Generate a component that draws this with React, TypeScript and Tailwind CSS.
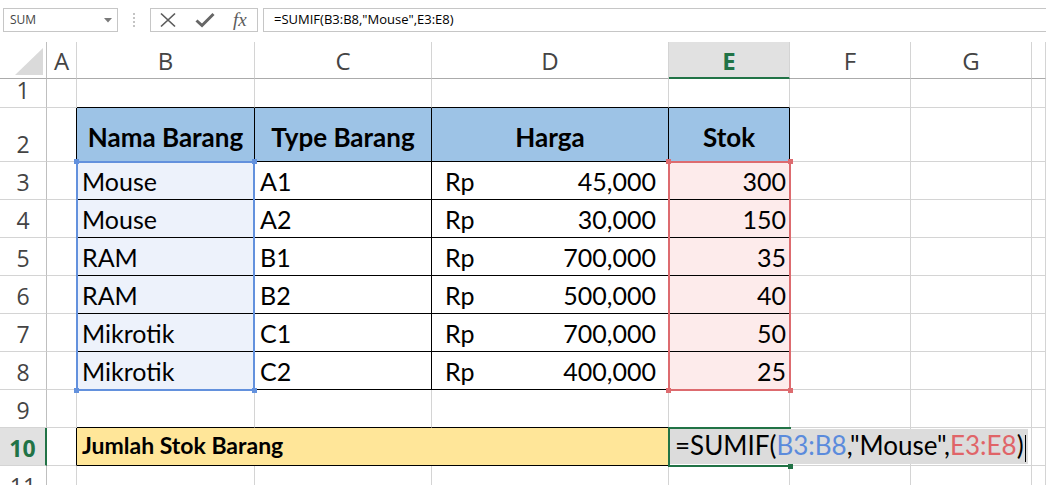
import React from 'react'

const rows = [
  { n: 3, name: 'Mouse', type: 'A1', price: '45,000', stok: '300' },
  { n: 4, name: 'Mouse', type: 'A2', price: '30,000', stok: '150' },
  { n: 5, name: 'RAM', type: 'B1', price: '700,000', stok: '35' },
  { n: 6, name: 'RAM', type: 'B2', price: '500,000', stok: '40' },
  { n: 7, name: 'Mikrotik', type: 'C1', price: '700,000', stok: '50' },
  { n: 8, name: 'Mikrotik', type: 'C2', price: '400,000', stok: '25' },
]

interface CellProps {
  r?: string
  b?: string
  className?: string
  children?: React.ReactNode
}

// plain worksheet cell: right + bottom gridline
function Cell({ r = 'border-r-[#d4d4d4]', b = 'border-b-[#d4d4d4]', className = '', children }: CellProps) {
  return <div className={`border-r border-b ${r} ${b} ${className}`}>{children}</div>
}

function RowHead({ n, active }: { n: number; active?: boolean }) {
  if (active) {
    return (
      <div className="flex items-end justify-center pb-[5px] border-r-2 border-b border-r-[#217346] border-b-[#d4d4d4] bg-[#e1e1e1] text-[23px] leading-none font-bold text-[#217346] font-['Open_Sans',sans-serif]">
        {n}
      </div>
    )
  }
  return (
    <div className="flex items-end justify-center pb-[5px] border-r border-b border-r-[#bfbfbf] border-b-[#d4d4d4] text-[23px] leading-none text-[#444] font-['Open_Sans',sans-serif]">
      {n}
    </div>
  )
}

function ColHead({ label, active }: { label: string; active?: boolean }) {
  if (active) {
    return (
      <div className="flex items-center justify-center pt-[2px] border-r border-b-2 border-r-[#d4d4d4] border-b-[#217346] bg-[#e1e1e1] text-[24px] leading-none font-bold text-[#217346] font-['Open_Sans',sans-serif]">
        {label}
      </div>
    )
  }
  return (
    <div className="flex items-center justify-center pt-[2px] border-r border-b border-r-[#d4d4d4] border-b-[#ababab] text-[24px] leading-none text-[#444] font-['Open_Sans',sans-serif]">
      {label}
    </div>
  )
}

export default function App() {
  return (
    <div className="w-[1046px] h-[485px] overflow-hidden bg-white font-['Lato',sans-serif] text-black">
      {/* Formula bar */}
      <div className="h-[42px] flex items-start pt-[8px]">
        <div className="ml-[3px] w-[115px] h-[24px] border border-[#c6c6c6] flex items-center justify-between pl-[6px] pr-[5px]">
          <span className="text-[12px] text-[#444] font-['Open_Sans',sans-serif]">SUM</span>
          <svg width="8" height="5" viewBox="0 0 8 5">
            <polygon points="0,0 8,0 4,4.5" fill="#7a7a7a" />
          </svg>
        </div>
        <div className="w-[32px] h-[24px] flex flex-col items-center justify-center gap-[2px]">
          <span className="w-[2px] h-[2px] bg-[#c4c4c4]" />
          <span className="w-[2px] h-[2px] bg-[#c4c4c4]" />
          <span className="w-[2px] h-[2px] bg-[#c4c4c4]" />
          <span className="w-[2px] h-[2px] bg-[#c4c4c4]" />
        </div>
        <div className="w-[108px] h-[24px] border border-[#c6c6c6] flex items-center pl-[8px] gap-[18px]">
          <svg width="18" height="16" viewBox="0 0 18 16">
            <path d="M2 1.5 L16 14.5 M16 1.5 L2 14.5" stroke="#5c5c5c" strokeWidth="1.7" fill="none" />
          </svg>
          <svg width="20" height="16" viewBox="0 0 20 16">
            <path d="M1.5 8.5 L7 13.5 L18.5 2" stroke="#666" strokeWidth="3" fill="none" strokeLinejoin="miter" />
          </svg>
          <span className="text-[19px] leading-none italic text-[#5c5c5c] font-['Liberation_Serif',serif] -mt-[2px]">fx</span>
        </div>
        <div className="ml-[5px] flex-1 h-[24px] border border-r-0 border-[#c6c6c6] flex items-center pl-[10px] text-[13px] text-black font-['Open_Sans',sans-serif]">
          =SUMIF(B3:B8,"Mouse",E3:E8)
        </div>
      </div>

      {/* Worksheet */}
      <div className="grid grid-cols-[47px_30px_178px_177px_237px_121px_121px_121px_1fr] grid-rows-[37px_29px_54px_repeat(9,38px)]">
        {/* header row */}
        <div className="border-r border-b border-r-[#bfbfbf] border-b-[#ababab] flex items-end justify-end pr-[3px] pb-[3px]">
          <svg width="28" height="27" viewBox="0 0 28 27">
            <polygon points="0,27 28,27 28,0" fill="#dadada" />
          </svg>
        </div>
        <ColHead label="A" />
        <ColHead label="B" />
        <ColHead label="C" />
        <ColHead label="D" />
        <ColHead label="E" active />
        <ColHead label="F" />
        <ColHead label="G" />
        <ColHead label="" />

        {/* row 1 */}
        <RowHead n={1} />
        <Cell />
        <Cell b="border-b-black" />
        <Cell b="border-b-black" />
        <Cell b="border-b-black" />
        <Cell b="border-b-black" />
        <Cell />
        <Cell />
        <Cell />

        {/* row 2: table header */}
        <RowHead n={2} />
        <Cell r="border-r-black" />
        <Cell r="border-r-black" b="border-b-black" className="bg-[#9dc3e6] flex items-end justify-center pb-[11px] text-[26px] leading-none font-bold">
          Nama Barang
        </Cell>
        <Cell r="border-r-black" b="border-b-black" className="bg-[#9dc3e6] flex items-end justify-center pb-[11px] text-[26px] leading-none font-bold">
          Type Barang
        </Cell>
        <Cell r="border-r-black" b="border-b-black" className="bg-[#9dc3e6] flex items-end justify-center pb-[11px] text-[26px] leading-none font-bold">
          Harga
        </Cell>
        <Cell r="border-r-black" b="border-b-black" className="bg-[#9dc3e6] flex items-end justify-center pb-[11px] text-[26px] leading-none font-bold">
          Stok
        </Cell>
        <Cell />
        <Cell />
        <Cell />

        {/* rows 3-8: data */}
        {rows.map((row, i) => (
          <React.Fragment key={row.n}>
            <RowHead n={row.n} />
            <Cell r="border-r-black" />
            <Cell r="border-r-black" b="border-b-black" className="relative bg-[#edf2fb] flex items-end pl-[5px] pb-[5px] text-[25px] leading-none">
              {row.name}
              {i === 0 && (
                <div className="absolute -left-px -top-px w-[179px] h-[230px] border-2 border-[#6391dd] z-10 pointer-events-none">
                  <div className="absolute -left-[4px] -top-[4px] w-[5px] h-[5px] bg-[#6391dd]" />
                  <div className="absolute -right-[4px] -top-[4px] w-[5px] h-[5px] bg-[#6391dd]" />
                  <div className="absolute -left-[4px] -bottom-[4px] w-[5px] h-[5px] bg-[#6391dd]" />
                  <div className="absolute -right-[4px] -bottom-[4px] w-[5px] h-[5px] bg-[#6391dd]" />
                </div>
              )}
            </Cell>
            <Cell r="border-r-black" b="border-b-black" className="flex items-end pl-[5px] pb-[5px] text-[25px] leading-none">
              {row.type}
            </Cell>
            <Cell r="border-r-black" b="border-b-black" className="flex items-end justify-between pl-[13px] pr-[12px] pb-[5px] text-[25px] leading-none">
              <span>Rp</span>
              <span>{row.price}</span>
            </Cell>
            <Cell r="border-r-black" b="border-b-black" className="relative bg-[#fdebeb] flex items-end justify-end pr-[3px] pb-[5px] text-[25px] leading-none">
              {row.stok}
              {i === 0 && (
                <div className="absolute -left-px -top-px w-[123px] h-[230px] border-2 border-[#dd6b6f] z-10 pointer-events-none">
                  <div className="absolute -left-[4px] -top-[4px] w-[5px] h-[5px] bg-[#dd6b6f]" />
                  <div className="absolute -right-[4px] -top-[4px] w-[5px] h-[5px] bg-[#dd6b6f]" />
                  <div className="absolute -left-[4px] -bottom-[4px] w-[5px] h-[5px] bg-[#dd6b6f]" />
                  <div className="absolute -right-[4px] -bottom-[4px] w-[5px] h-[5px] bg-[#dd6b6f]" />
                </div>
              )}
            </Cell>
            <Cell />
            <Cell />
            <Cell />
          </React.Fragment>
        ))}

        {/* row 9 */}
        <RowHead n={9} />
        <Cell />
        <Cell b="border-b-black" />
        <Cell b="border-b-black" />
        <Cell b="border-b-black" />
        <Cell />
        <Cell />
        <Cell />
        <Cell />

        {/* row 10: total */}
        <RowHead n={10} active />
        <Cell r="border-r-black" />
        <Cell r="border-r-black" b="border-b-black" className="col-span-3 bg-[#ffe699] flex items-end pl-[5px] pb-[8px] text-[23px] leading-none font-bold">
          Jumlah Stok Barang
        </Cell>
        <Cell className="relative">
          {/* active cell frame */}
          <div className="absolute -left-px -top-px w-[123px] h-[40px] border-2 border-[#217346] z-10">
            <div className="absolute -right-[4px] -bottom-[4px] w-[5px] h-[5px] bg-[#217346]" />
          </div>
          {/* in-cell editor */}
          <div className="absolute left-[1px] top-[1px] h-[35px] z-20 bg-[#dcdcdc] flex items-end whitespace-nowrap pl-[5px] pr-[2px] pb-[6px] text-[26px] leading-none">
            <span>=SUMIF(</span>
            <span className="text-[#5b8bdc]">B3:B8</span>
            <span>,"Mouse",</span>
            <span className="text-[#e06468]">E3:E8</span>
            <span>)</span>
            <span className="ml-[1px] w-px h-[27px] bg-black self-end -mb-[4px]" />
          </div>
        </Cell>
        <Cell />
        <Cell />
        <Cell />

        {/* row 11 */}
        <RowHead n={11} />
        <Cell />
        <Cell />
        <Cell />
        <Cell />
        <Cell />
        <Cell />
        <Cell />
        <Cell />
      </div>
    </div>
  )
}
